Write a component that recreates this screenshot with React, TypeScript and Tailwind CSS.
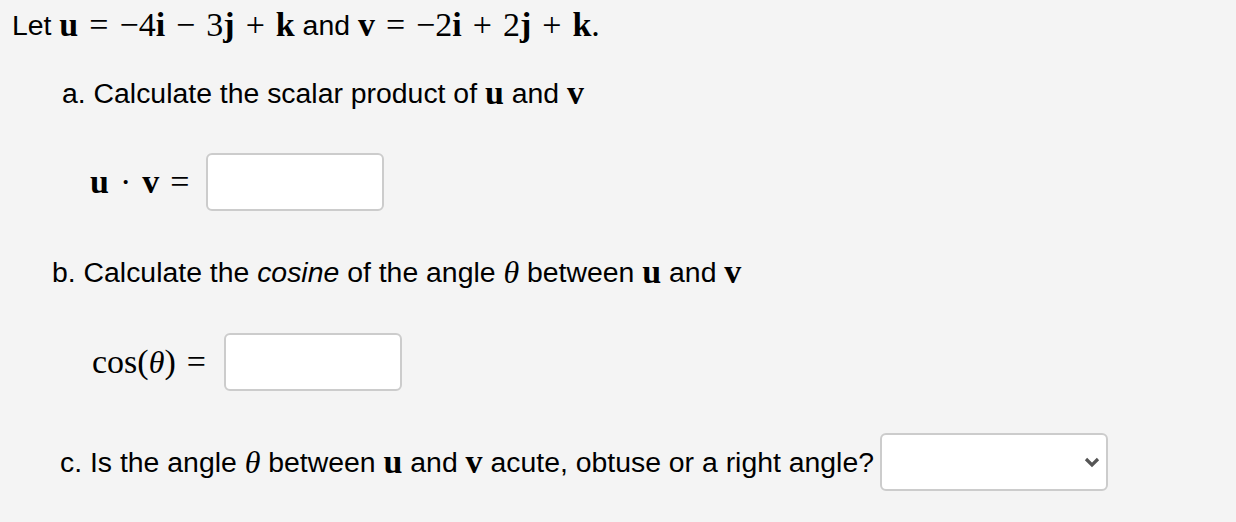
import React from "react"

const serif = "[font-family:'Liberation_Serif',serif]"

function B({ children }: { children: React.ReactNode }) {
  return <span className={`${serif} font-bold text-[34px]`}>{children}</span>
}

function M({ children }: { children: React.ReactNode }) {
  return <span className={`${serif} text-[34px]`}>{children}</span>
}

function Op({ children }: { children: React.ReactNode }) {
  return <span className={`${serif} text-[34px] mx-[11px]`}>{children}</span>
}

function Theta() {
  return <span className={`${serif} italic text-[32px]`}>θ</span>
}

function Box({ w }: { w: string }) {
  return <div className={`${w} h-[58px] bg-white border-2 border-[#cccccc] rounded-[6px]`} />
}

export default function App() {
  return (
    <div className="w-[1236px] h-[522px] bg-[#f4f4f4] text-black text-[28.4px] leading-none [font-family:'Liberation_Sans',Arial,sans-serif] flex flex-col">
      <div className="h-[50px] flex items-center pl-[12px] whitespace-nowrap">
        <span>Let&nbsp;</span>
        <B>u</B>
        <Op>=</Op>
        <M>−4</M>
        <B>i</B>
        <Op>−</Op>
        <M>3</M>
        <B>j</B>
        <Op>+</Op>
        <B>k</B>
        <span>&nbsp;and&nbsp;</span>
        <B>v</B>
        <Op>=</Op>
        <M>−2</M>
        <B>i</B>
        <Op>+</Op>
        <M>2</M>
        <B>j</B>
        <Op>+</Op>
        <B>k</B>
        <M>.</M>
      </div>

      <div className="h-[50px] mt-[18px] flex items-center pl-[62px] whitespace-nowrap">
        <span>a. Calculate the scalar product of&nbsp;</span>
        <B>u</B>
        <span>&nbsp;and&nbsp;</span>
        <B>v</B>
      </div>

      <div className="h-[58px] mt-[35px] flex items-center pl-[90px]">
        <B>u</B>
        <Op>·</Op>
        <B>v</B>
        <Op>=</Op>
        <div className="ml-[6px]">
          <Box w="w-[178px]" />
        </div>
      </div>

      <div className="h-[50px] mt-[36px] flex items-center pl-[52px] whitespace-nowrap">
        <span>b. Calculate the&nbsp;</span>
        <span className="italic">cosine</span>
        <span>&nbsp;of the angle&nbsp;</span>
        <Theta />
        <span>&nbsp;between&nbsp;</span>
        <B>u</B>
        <span>&nbsp;and&nbsp;</span>
        <B>v</B>
      </div>

      <div className="h-[58px] mt-[36px] flex items-center pl-[92px]">
        <M>cos(</M>
        <Theta />
        <M>)</M>
        <Op>=</Op>
        <div className="ml-[7px]">
          <Box w="w-[178px]" />
        </div>
      </div>

      <div className="h-[58px] mt-[42px] flex items-center pl-[60px] whitespace-nowrap">
        <span>c. Is the angle&nbsp;</span>
        <Theta />
        <span>&nbsp;between&nbsp;</span>
        <B>u</B>
        <span>&nbsp;and&nbsp;</span>
        <B>v</B>
        <span>&nbsp;acute, obtuse or a right angle?</span>
        <div className="ml-[6px] w-[228px] h-[58px] bg-white border-2 border-[#cccccc] rounded-[6px] flex items-center justify-end pr-[6px]">
          <svg width="16" height="12" viewBox="0 0 16 12">
            <path d="M2 3 L8 9 L14 3" fill="none" stroke="#555555" strokeWidth="3.2" />
          </svg>
        </div>
      </div>
    </div>
  )
}
